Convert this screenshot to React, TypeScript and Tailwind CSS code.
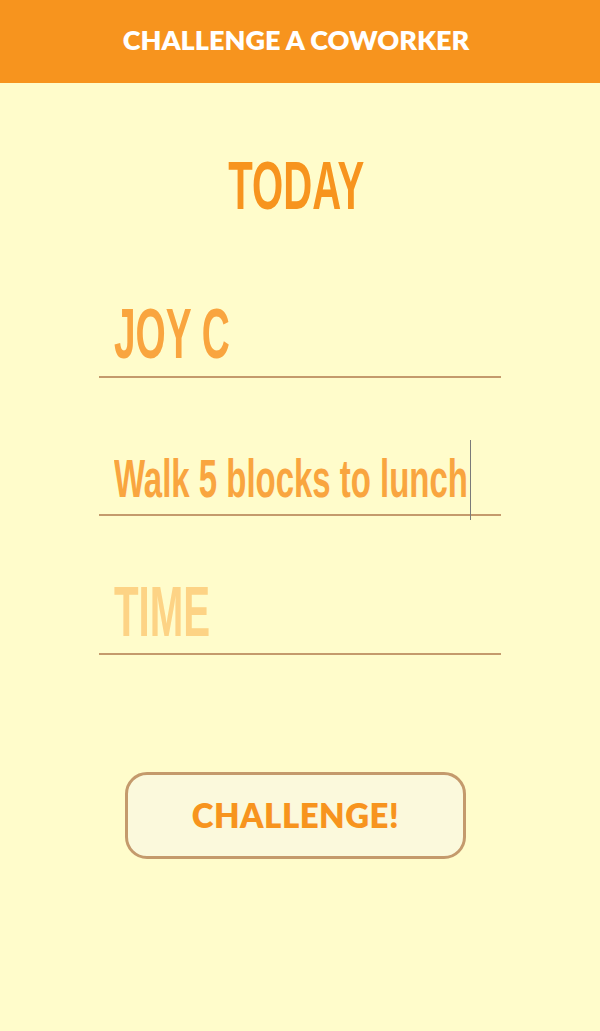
const condensed = { fontFamily: '"Liberation Sans", Arial, sans-serif' };

const Field = ({
  text,
  size,
  scale,
  color,
  pad,
  cursor,
}: {
  text: string;
  size: string;
  scale: string;
  color: string;
  pad: string;
  cursor?: boolean;
}) => (
  <div className={`relative w-[402px] mx-auto border-b-2 border-[#c49a6c] pl-[15px] ${pad}`}>
    <div
      className={`whitespace-nowrap font-bold leading-none origin-left ${size} ${scale} ${color}`}
      style={condensed}
    >
      {text}
    </div>
    {cursor && (
      <div className="absolute left-[371px] top-[-11px] h-[80px] w-px bg-[#7a7a7a]" />
    )}
  </div>
);

export default function App() {
  return (
    <div
      className="min-h-[1031px] w-[600px] bg-[#fffccb]"
      style={{ fontFamily: 'Lato, "Open Sans", sans-serif' }}
    >
      <header className="h-[83px] bg-[#f7941e] flex items-center justify-center pr-[8px] pb-[3px]">
        <h1 className="text-white text-[27px] font-extrabold">
          CHALLENGE A COWORKER
        </h1>
      </header>

      <div className="flex justify-center pt-[68px] pr-[7px]">
        <h2
          className="font-bold text-[68px] leading-none text-[#f7941e] scale-x-[0.59] whitespace-nowrap"
          style={condensed}
        >
          TODAY
        </h2>
      </div>

      <div className="mt-[80px] flex flex-col">
        <Field
          text="JOY C"
          size="text-[70px]"
          scale="scale-x-[0.555]"
          color="text-[#f9a53f]"
          pad="pb-[7px]"
        />
        <div className="h-[73px]" />
        <Field
          text="Walk 5 blocks to lunch"
          size="text-[54px]"
          scale="scale-x-[0.61]"
          color="text-[#f9a53f]"
          pad="pb-[9px]"
          cursor
        />
        <div className="h-[61px]" />
        <Field
          text="TIME"
          size="text-[70px]"
          scale="scale-x-[0.575]"
          color="text-[#fdd385]"
          pad="pb-[6px]"
        />
      </div>

      <div className="flex justify-center pt-[117px] pr-[9px]">
        <button className="w-[341px] h-[87px] rounded-[22px] border-[3px] border-[#c49a6c] bg-[#fbf9dc] text-[#f7941e] text-[33px] font-extrabold tracking-[0.5px]">
          CHALLENGE!
        </button>
      </div>
    </div>
  );
}
